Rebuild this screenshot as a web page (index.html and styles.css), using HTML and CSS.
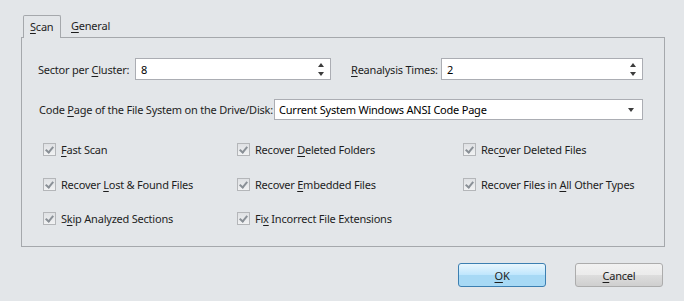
FILE: index.html
```html
<!DOCTYPE html>
<html lang="en">
<head>
  <meta charset="UTF-8" />
  <title>Scan Settings</title>
  <link rel="stylesheet" href="styles.css">
</head>
<body>
  <div class="dialog">
    <div class="tabs">
      <div class="tab active"><span><u>S</u>can</span></div>
      <div class="tab"><span><u>G</u>eneral</span></div>
    </div>

    <div class="panel">
      <div class="row">
        <label class="lbl-sector">Sector per <u>C</u>luster:</label>
        <div class="field spin sector">
          <span>8</span>
          <span class="arrows"><i class="up"></i><i class="down"></i></span>
        </div>
        <label class="lbl-times"><u>R</u>eanalysis Times:</label>
        <div class="field spin times">
          <span>2</span>
          <span class="arrows"><i class="up"></i><i class="down"></i></span>
        </div>
      </div>

      <div class="row row-code">
        <label class="lbl-code">Code <u>P</u>age of the File System on the Drive/Disk:</label>
        <div class="field combo">
          <span>Current System Windows ANSI Code Page</span>
          <i class="down"></i>
        </div>
      </div>

      <div class="checks">
        <div class="check"><span class="box"></span><span><u>F</u>ast Scan</span></div>
        <div class="check"><span class="box"></span><span>Recover <u>D</u>eleted Folders</span></div>
        <div class="check"><span class="box"></span><span>Rec<u>o</u>ver Deleted Files</span></div>
        <div class="check"><span class="box"></span><span>Recover <u>L</u>ost &amp; Found Files</span></div>
        <div class="check"><span class="box"></span><span>Recover <u>E</u>mbedded Files</span></div>
        <div class="check"><span class="box"></span><span>Recover Files in <u>A</u>ll Other Types</span></div>
        <div class="check"><span class="box"></span><span>S<u>k</u>ip Analyzed Sections</span></div>
        <div class="check"><span class="box"></span><span>Fi<u>x</u> Incorrect File Extensions</span></div>
      </div>
    </div>

    <div class="buttons">
      <button class="btn ok"><u>O</u>K</button>
      <button class="btn cancel"><u>C</u>ancel</button>
    </div>
  </div>
</body>
</html>
```

FILE: styles.css
```css
body {
  margin: 0;
  background-color: #e3e6e9;
  font-family: 'Noto Sans', sans-serif;
  font-size: 11px;
  letter-spacing: -0.22px;
  color: #1e1e1e;
}

u {
  text-decoration: underline;
  text-underline-offset: 2px;
}

.dialog {
  padding: 15px 0 0 21px;
}

.tabs {
  display: flex;
  height: 22px;
  padding-left: 2px;
}

.tab {
  height: 22px;
  line-height: 22px;
  padding: 0 9px 0 10px;
}

.tab.active {
  width: 38px;
  box-sizing: border-box;
  padding: 0 0 0 6px;
  border: 1px solid #a5a8ac;
  border-bottom: none;
  background-color: #e3e6e9;
  height: 23px;
  position: relative;
  z-index: 1;
  border-radius: 2px 2px 0 0;
}

.panel {
  width: 642px;
  height: 208px;
  border: 1px solid #a5a8ac;
}

.row {
  display: flex;
  align-items: center;
  margin-top: 20px;
  height: 22px;
}

.row-code {
  margin-top: 19px;
  height: 21px;
}

label {
  white-space: nowrap;
}

.lbl-sector {
  margin-left: 16px;
  width: 97px;
}

.lbl-times {
  margin-left: 20px;
  width: 90px;
}

.lbl-code {
  margin-left: 17px;
  width: 235px;
}

.field {
  box-sizing: border-box;
  height: 22px;
  border: 1px solid #abadb3;
  background-color: white;
  display: flex;
  align-items: center;
  justify-content: space-between;
  padding: 0 6px 0 5px;
  color: #000;
}

.sector { width: 196px; }
.times { width: 202px; }

.combo {
  width: 369px;
  height: 21px;
  padding-left: 4px;
  padding-right: 8px;
}

.arrows {
  display: flex;
  flex-direction: column;
  gap: 5px;
}

.up, .down {
  display: block;
  width: 0;
  height: 0;
  border-left: 3px solid transparent;
  border-right: 3px solid transparent;
}

.up { border-bottom: 4px solid #3c3c3c; }
.down { border-top: 4px solid #3c3c3c; }

.checks {
  display: grid;
  grid-template-columns: 194px 226px 190px;
  grid-auto-rows: 34.5px;
  margin: 21px 0 0 21px;
}

.check {
  display: flex;
  align-items: center;
  white-space: nowrap;
  height: 17px;
}

.box {
  width: 11px;
  height: 11px;
  border: 1px solid #b4b6b9;
  background: linear-gradient(#dfe1e4, #f1f2f3);
  margin-right: 5px;
  position: relative;
}

.box::after {
  content: "";
  position: absolute;
  left: 3px;
  top: 1px;
  width: 3px;
  height: 6px;
  border-right: 2px solid #8a9097;
  border-bottom: 2px solid #8a9097;
  transform: rotate(40deg);
}

.buttons {
  display: flex;
  gap: 29px;
  margin: 16px 0 0 437px;
}

.btn {
  width: 88px;
  height: 24px;
  font-family: inherit;
  font-size: 11px;
  letter-spacing: inherit;
  color: #1e1e1e;
  border-radius: 3px;
  cursor: pointer;
}

.ok {
  border: 1px solid #3c7fb1;
  background: linear-gradient(#e9f6fd 0%, #bee6fd 50%, #a7d9f5 51%, #a7d9f5 100%);
}

.cancel {
  border: 1px solid #acacac;
  background: linear-gradient(#f2f2f2 0%, #ebebeb 50%, #dddddd 51%, #cfcfcf 100%);
}
```
